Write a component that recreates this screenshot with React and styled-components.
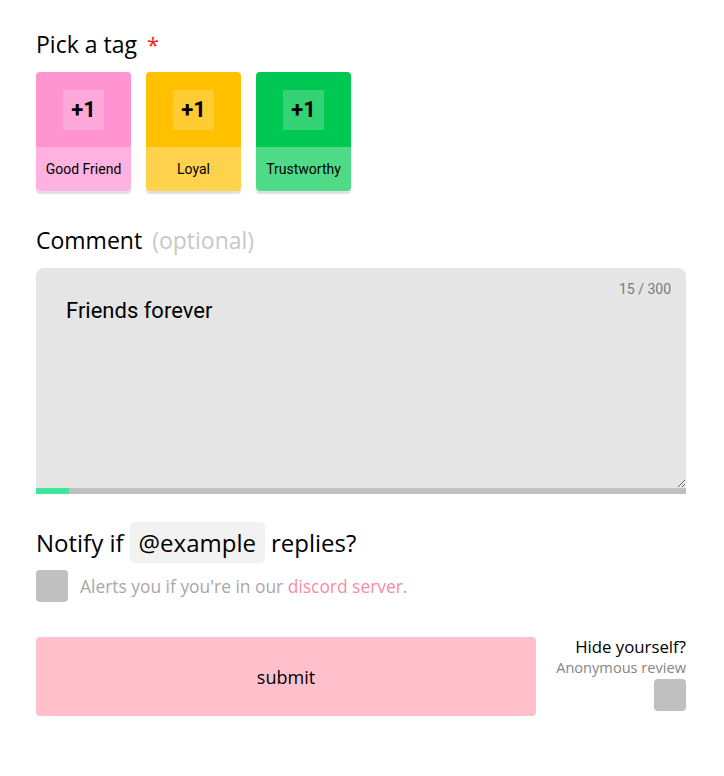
import React from 'react'
import styled, { createGlobalStyle } from 'styled-components'

const Global = createGlobalStyle`
  body {
    margin: 0;
    background: #fff;
    font-family: 'Open Sans', 'Noto Sans', sans-serif;
    color: #000;
  }
`

const Page = styled.div`
  width: 650px;
  padding: 28px 36px 40px;
`

const Heading = styled.h2`
  margin: 0;
  font-size: 23px;
  font-weight: 400;
  line-height: 32px;
  display: flex;
  align-items: baseline;
  gap: 10px;
`

const Star = styled.span`
  color: #ff1a1a;
  font-size: 22px;
`

const Muted = styled.span`
  color: #c8c8c8;
`

const Tags = styled.div`
  display: flex;
  gap: 15px;
  margin-top: 12px;
`

const Tag = styled.div`
  width: 95px;
  border-radius: 4px;
  overflow: hidden;
  box-shadow: 0 3px 1px rgba(0, 0, 0, 0.12);
  font-family: Roboto, sans-serif;
`

const TagTop = styled.div`
  height: 75px;
  background: ${p => p.color};
  display: flex;
  align-items: center;
  justify-content: center;
`

const Plus = styled.div`
  width: 41px;
  height: 40px;
  background: rgba(255, 255, 255, 0.2);
  display: flex;
  align-items: center;
  justify-content: center;
  font-weight: 700;
  font-size: 22px;
`

const TagLabel = styled.div`
  height: 44px;
  background: ${p => p.color};
  display: flex;
  align-items: center;
  justify-content: center;
  font-size: 14px;
`

const Section = styled.div`
  margin-top: ${p => p.top || 0}px;
`

const Area = styled.div`
  position: relative;
  margin-top: 12px;
`

const TextBox = styled.textarea`
  display: block;
  width: 100%;
  height: 220px;
  box-sizing: border-box;
  border: none;
  border-radius: 8px 8px 0 0;
  background: #e5e5e5;
  padding: 30px 30px;
  font-family: Roboto, sans-serif;
  font-size: 22px;
  color: #000;
  outline: none;
  resize: vertical;
`

const Counter = styled.span`
  position: absolute;
  top: 13px;
  right: 15px;
  font-family: Roboto, sans-serif;
  font-size: 14px;
  color: #7a7a7a;
`

const Progress = styled.div`
  height: 6px;
  background: #c0c0c0;
`

const Fill = styled.div`
  height: 100%;
  background: #3ee69e;
`

const Notify = styled.div`
  display: flex;
  align-items: center;
  gap: 6px;
  font-size: 24px;
  line-height: 41px;
`

const Handle = styled.span`
  background: #f2f2f2;
  border-radius: 5px;
  padding: 0 9px;
`

const CheckRow = styled.label`
  display: flex;
  align-items: center;
  gap: 12px;
  margin-top: 7px;
  font-size: 17.4px;
  color: #a8a8a8;
`

const Box = styled.span`
  width: 32px;
  height: 32px;
  border-radius: 4px;
  background: #c0c0c0;
  flex: none;
`

const Link = styled.a`
  color: #f58ea3;
  text-decoration: none;
`

const Footer = styled.div`
  display: flex;
  justify-content: space-between;
  align-items: flex-start;
  margin-top: 35px;
`

const Submit = styled.button`
  width: 500px;
  height: 79px;
  border: none;
  border-radius: 4px;
  background: #ffc0cb;
  font-family: inherit;
  font-size: 18px;
  color: #000;
`

const Hide = styled.div`
  display: flex;
  flex-direction: column;
  align-items: flex-end;
`

const HideTitle = styled.div`
  font-size: 16.8px;
  line-height: 20px;
`

const HideSub = styled.div`
  font-size: 14.6px;
  line-height: 20px;
  color: #858585;
  margin-bottom: 2px;
`

const tags = [
  { name: 'Good Friend', top: '#ff94d1', bottom: '#ffb2e0' },
  { name: 'Loyal', top: '#ffc000', bottom: '#ffd24e' },
  { name: 'Trustworthy', top: '#00c853', bottom: '#4fda88' },
]

export default function App() {
  const text = 'Friends forever'
  return (
    <Page>
      <Global />
      <Heading>
        Pick a tag <Star>*</Star>
      </Heading>
      <Tags>
        {tags.map(t => (
          <Tag key={t.name}>
            <TagTop color={t.top}>
              <Plus>+1</Plus>
            </TagTop>
            <TagLabel color={t.bottom}>{t.name}</TagLabel>
          </Tag>
        ))}
      </Tags>

      <Section top={33}>
        <Heading>
          Comment <Muted>(optional)</Muted>
        </Heading>
        <Area>
          <TextBox defaultValue={text} />
          <Counter>{text.length} / 300</Counter>
          <Progress>
            <Fill style={{ width: `${(text.length / 300) * 100}%` }} />
          </Progress>
        </Area>
      </Section>

      <Section top={28}>
        <Notify>
          Notify if <Handle>@example</Handle> replies?
        </Notify>
        <CheckRow>
          <Box />
          <span>
            Alerts you if you're in our <Link href="#">discord server</Link>.
          </span>
        </CheckRow>
      </Section>

      <Footer>
        <Submit>submit</Submit>
        <Hide>
          <HideTitle>Hide yourself?</HideTitle>
          <HideSub>Anonymous review</HideSub>
          <Box />
        </Hide>
      </Footer>
    </Page>
  )
}
